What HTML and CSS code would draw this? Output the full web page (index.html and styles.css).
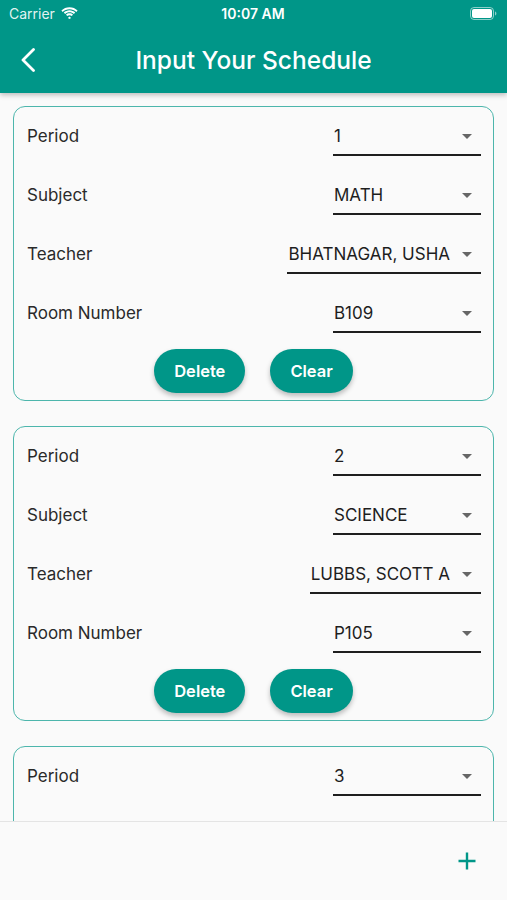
FILE: index.html
```html
<!DOCTYPE html>
<html>
<head>
    <meta name="viewport" content="width=device-width, initial-scale=1.0">
    <title>Input Your Schedule</title>
    <link rel="stylesheet" href="styles.css">
</head>
<body>
<div class="app">
    <header class="appbar">
        <div class="status">
            <div class="status-left">
                <span>Carrier</span>
                <svg class="wifi" width="17" height="12" viewBox="0 0 17 12">
                    <path d="M8.5 2.2c2.6 0 5 1 6.8 2.7l1.3-1.4C14.5 1.4 11.6.2 8.5.2S2.5 1.4.4 3.5l1.3 1.4C3.5 3.2 5.9 2.2 8.5 2.2z" fill="#fff"/>
                    <path d="M8.5 5.3c1.7 0 3.2.6 4.4 1.7l1.3-1.4C12.7 4.2 10.7 3.3 8.5 3.3S4.3 4.2 2.8 5.6L4.1 7c1.2-1.1 2.7-1.7 4.4-1.7z" fill="#fff"/>
                    <path d="M8.5 8.3c.9 0 1.6.3 2.2.8l1.3-1.4c-.9-.9-2.1-1.4-3.5-1.4S5.9 6.8 5 7.7l1.3 1.4c.6-.5 1.3-.8 2.2-.8zM8.5 9.4l-1.6 1.6 1.6 1 1.6-1z" fill="#fff"/>
                </svg>
            </div>
            <div class="status-time">10:07 AM</div>
            <div class="status-right">
                <svg width="27" height="13" viewBox="0 0 27 13">
                    <rect x="0.5" y="0.5" width="23" height="12" rx="3.5" fill="none" stroke="rgba(255,255,255,0.55)"/>
                    <rect x="2" y="2" width="20" height="9" rx="2" fill="#fff"/>
                    <path d="M25 4.5v4c.8-.3 1.4-1 1.4-2s-.6-1.7-1.4-2z" fill="rgba(255,255,255,0.55)"/>
                </svg>
            </div>
        </div>
        <div class="toolbar">
            <svg class="back" width="16" height="24" viewBox="0 0 16 24">
                <path d="M13.5 1.5 3 12l10.5 10.5" fill="none" stroke="#fff" stroke-width="2.8" stroke-linecap="round" stroke-linejoin="round"/>
            </svg>
            <h1 class="title">Input Your Schedule</h1>
        </div>
    </header>

    <main class="list">
        <section class="card">
            <div class="row">
                <span class="label">Period</span>
                <div class="dd"><span class="dd-value">1</span><span class="dd-arrow"></span></div>
            </div>
            <div class="row">
                <span class="label">Subject</span>
                <div class="dd"><span class="dd-value">MATH</span><span class="dd-arrow"></span></div>
            </div>
            <div class="row">
                <span class="label">Teacher</span>
                <div class="dd"><span class="dd-value">BHATNAGAR, USHA</span><span class="dd-arrow"></span></div>
            </div>
            <div class="row">
                <span class="label">Room Number</span>
                <div class="dd"><span class="dd-value">B109</span><span class="dd-arrow"></span></div>
            </div>
            <div class="actions">
                <button class="pill">Delete</button>
                <button class="pill">Clear</button>
            </div>
        </section>

        <section class="card">
            <div class="row">
                <span class="label">Period</span>
                <div class="dd"><span class="dd-value">2</span><span class="dd-arrow"></span></div>
            </div>
            <div class="row">
                <span class="label">Subject</span>
                <div class="dd"><span class="dd-value">SCIENCE</span><span class="dd-arrow"></span></div>
            </div>
            <div class="row">
                <span class="label">Teacher</span>
                <div class="dd"><span class="dd-value">LUBBS, SCOTT A</span><span class="dd-arrow"></span></div>
            </div>
            <div class="row">
                <span class="label">Room Number</span>
                <div class="dd"><span class="dd-value">P105</span><span class="dd-arrow"></span></div>
            </div>
            <div class="actions">
                <button class="pill">Delete</button>
                <button class="pill">Clear</button>
            </div>
        </section>

        <!-- last card runs under the bottom bar -->
        <section class="card card-partial">
            <div class="row">
                <span class="label">Period</span>
                <div class="dd"><span class="dd-value">3</span><span class="dd-arrow"></span></div>
            </div>
        </section>
    </main>

    <footer class="bottombar">
        <svg class="add" width="20" height="20" viewBox="0 0 20 20">
            <path d="M10 1.5v17M1.5 10h17" stroke="#009688" stroke-width="2.4"/>
        </svg>
    </footer>
</div>
</body>
</html>
```

FILE: styles.css
```css
html, body {
    margin: 0;
    padding: 0;
}

body {
    background-color: #fafafa;
    font-family: Inter, "Noto Sans", sans-serif;
    color: #222;
}

.app {
    display: flex;
    flex-direction: column;
    height: 100vh;
    overflow: hidden;
}

/* top bar */
.appbar {
    background-color: #009688;
    color: #fff;
    box-shadow: 0 2px 5px rgba(0, 0, 0, 0.25);
    position: relative;
    z-index: 2;
    flex-shrink: 0;
}

.status {
    height: 26px;
    display: flex;
    align-items: center;
    justify-content: space-between;
    padding: 0 10px 0 9px;
    font-size: 14px;
}

.status-left {
    display: flex;
    align-items: center;
    gap: 6px;
    width: 100px;
    color: rgba(255, 255, 255, 0.9);
}

.status-time {
    font-weight: 600;
}

.status-right {
    width: 100px;
    display: flex;
    justify-content: flex-end;
}

.toolbar {
    height: 67px;
    display: flex;
    align-items: center;
    justify-content: center;
    position: relative;
}

.back {
    position: absolute;
    left: 20px;
    top: 22px;
}

.title {
    margin: 0;
    font-size: 24.5px;
    font-weight: 500;
}

/* cards */
.list {
    flex: 1;
    overflow: hidden;
    padding: 13px 13px 0;
}

.card {
    border: 1.5px solid #4db6ac;
    border-radius: 12px;
    padding: 0 12px 7px;
    margin-bottom: 25px;
}

.card-partial {
    min-height: 120px;
}

.row {
    height: 59px;
    box-sizing: border-box;
    padding-bottom: 2px;
    display: flex;
    align-items: center;
    justify-content: space-between;
}

.label {
    font-size: 17px;
    color: #2a2a2a;
    padding-left: 1px;
}

.dd {
    min-width: 148px;
    height: 37px;
    display: flex;
    align-items: center;
    border-bottom: 2px solid #1e1e1e;
    font-size: 17px;
    color: #1e1e1e;
    box-sizing: border-box;
    margin-top: 3px;
}

.dd-value {
    flex: 1;
    white-space: nowrap;
    padding-left: 1px;
}

.dd-arrow {
    width: 0;
    height: 0;
    border-left: 5.5px solid transparent;
    border-right: 5.5px solid transparent;
    border-top: 5.5px solid #666;
    margin: 0 9px 0 12px;
}

.actions {
    display: flex;
    justify-content: center;
    gap: 25px;
    margin-top: 6px;
}

.pill {
    height: 44px;
    padding: 0 20px;
    border: none;
    border-radius: 22px;
    background-color: #009688;
    color: #fff;
    font-family: Inter, "Noto Sans", sans-serif;
    font-size: 16.5px;
    font-weight: 600;
    box-shadow: 0 3px 5px rgba(0, 0, 0, 0.25);
    cursor: pointer;
}

/* bottom */
.bottombar {
    height: 79px;
    flex-shrink: 0;
    background-color: #fafafa;
    border-top: 1.5px solid #e4e4e4;
    display: flex;
    justify-content: flex-end;
    align-items: flex-start;
    padding: 29px 30px 0 0;
    box-sizing: border-box;
    position: relative;
    z-index: 2;
}
```
